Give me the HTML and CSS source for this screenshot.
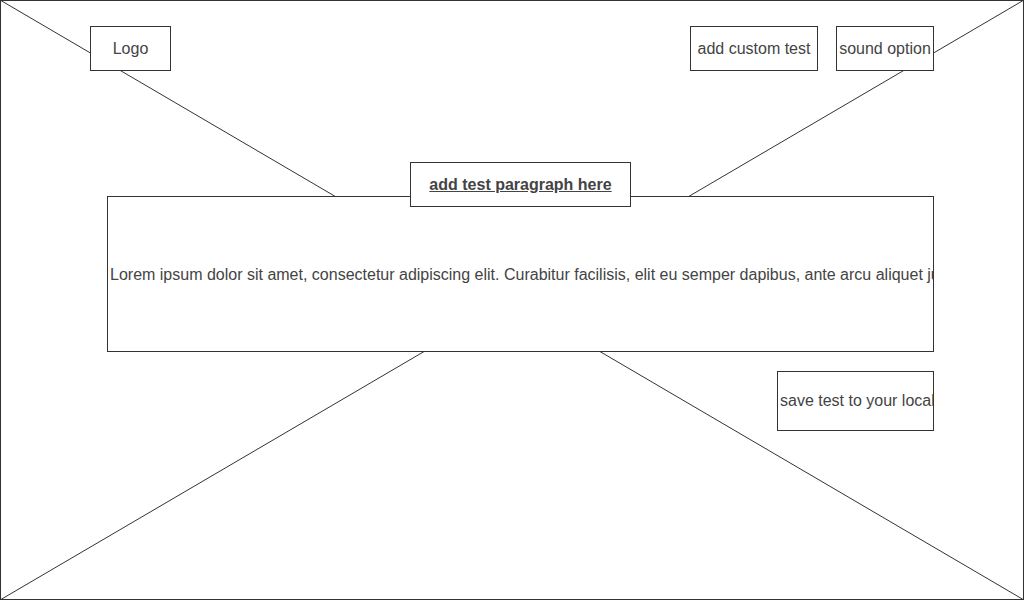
FILE: index.html
```html
<!DOCTYPE html>
<html lang="en">
<head>
  <meta charset="UTF-8" />
  <meta name="viewport" content="width=device-width, initial-scale=1.0"/>
  <title>Typing Test Wireframe</title>
  <link rel="stylesheet" href="styles.css">
</head>
<body>
  <div class="frame">
    <!-- cross lines behind the boxes -->
    <svg class="cross" width="1024" height="600" viewBox="0 0 1024 600">
      <line x1="0" y1="0" x2="1024" y2="600" />
      <line x1="1024" y1="0" x2="0" y2="600" />
    </svg>

    <div class="header">
      <div class="box logo">Logo</div>
      <div class="header-right">
        <div class="box custom-btn">add custom test</div>
        <div class="box sound-btn">sound option</div>
      </div>
    </div>

    <div class="main">
      <div class="box title">add test paragraph here</div>
      <div class="box paragraph">
        <span>Lorem ipsum dolor sit amet, consectetur adipiscing elit. Curabitur facilisis, elit eu semper dapibus, ante arcu aliquet justo, vel tincidunt nulla lorem at sapien.</span>
      </div>
      <div class="save-row">
        <div class="box save-btn">save test to your local</div>
      </div>
    </div>
  </div>
</body>
</html>
```

FILE: styles.css
```css
body {
  margin: 0;
  font-family: 'Liberation Sans', Arial, sans-serif;
  font-size: 16px;
  color: #444444;
  background: #ffffff;
}
.frame {
  position: relative;
  width: 1024px;
  height: 600px;
  box-sizing: border-box;
  border: 1px solid #333333;
  overflow: hidden;
}
.cross {
  position: absolute;
  top: -1px; left: -1px;
}
.cross line {
  stroke: #333333;
  stroke-width: 1;
}
.box {
  position: relative;
  box-sizing: border-box;
  border: 1px solid #333333;
  background: #ffffff;
  display: flex;
  align-items: center;
  justify-content: center;
  white-space: nowrap;
  overflow: hidden;
}
.header {
  display: flex;
  justify-content: space-between;
  padding: 25px 89px 0 89px;
}
.header-right {
  display: flex;
  gap: 18px;
}
.header .box {
  height: 45px;
}
.logo { width: 81px; }
.custom-btn { width: 128px; }
.sound-btn { width: 98px; }

.main {
  margin: 91px 89px 0 106px;
  display: flex;
  flex-direction: column;
}
.title {
  z-index: 1;
  align-self: center;
  width: 221px;
  height: 45px;
  margin-bottom: -11px;
  font-weight: bold;
  text-decoration: underline;
}
.paragraph {
  height: 156px;
  justify-content: flex-start;
  padding-left: 2px;
  padding-top: 2px;
}
.save-row {
  display: flex;
  justify-content: flex-end;
  margin-top: 19px;
}
.save-btn {
  width: 157px;
  height: 60px;
  justify-content: flex-start;
  padding-left: 2px;
}
```
